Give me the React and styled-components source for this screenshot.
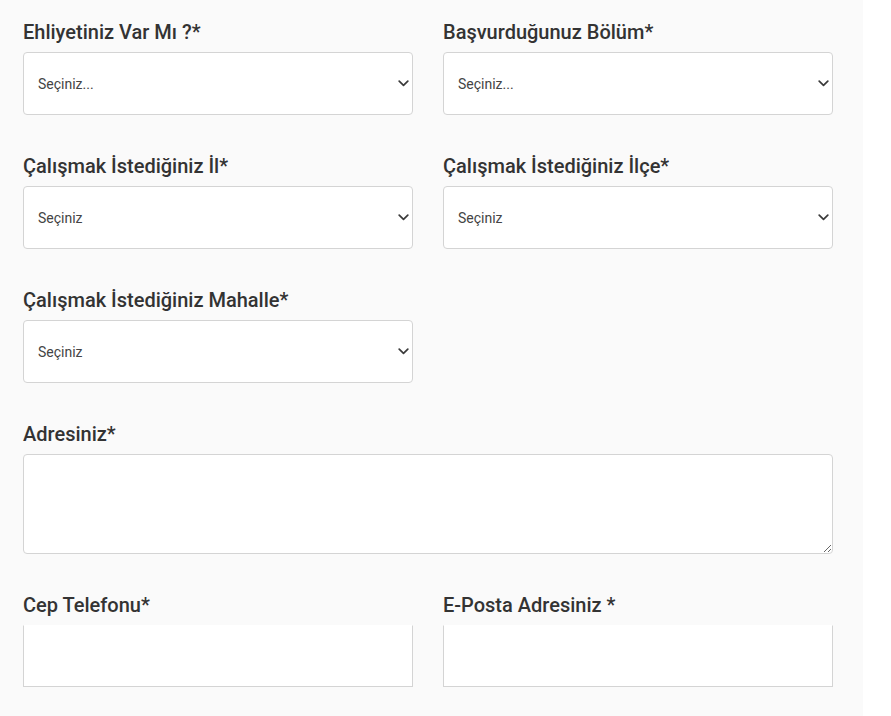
import styled, { createGlobalStyle } from 'styled-components';

const GlobalStyle = createGlobalStyle`
  body {
    margin: 0;
    background: #ffffff;
    font-family: Roboto, 'Liberation Sans', sans-serif;
  }
`;

const Page = styled.div`
  width: 863px;
  min-height: 716px;
  background: #fafafa;
  box-sizing: border-box;
  padding: 21px 0 0 23px;
`;

const Form = styled.form`
  display: grid;
  grid-template-columns: 390px 390px;
  column-gap: 30px;
  row-gap: 40px;
`;

const Field = styled.div`
  display: flex;
  flex-direction: column;
  grid-column: ${(p) => (p.$wide ? '1 / span 2' : 'auto')};
`;

const Label = styled.label`
  font-size: 20px;
  line-height: 22px;
  font-weight: 500;
  color: #333333;
  margin-bottom: 9px;
`;

const SelectWrap = styled.div`
  position: relative;
`;

const Select = styled.select`
  appearance: none;
  width: 100%;
  height: 63px;
  box-sizing: border-box;
  border: 1px solid #d4d4d4;
  border-radius: 4px;
  background: #ffffff;
  padding: 0 30px 0 14px;
  font-family: Roboto, 'Liberation Sans', sans-serif;
  font-size: 14px;
  color: #444444;
  outline: none;
`;

const Chevron = styled.svg`
  position: absolute;
  right: 4px;
  top: 28px;
  width: 11px;
  height: 7px;
  pointer-events: none;
`;

const TextArea = styled.textarea`
  width: 100%;
  height: 100px;
  box-sizing: border-box;
  border: 1px solid #d4d4d4;
  border-radius: 4px;
  background: #ffffff;
  outline: none;
  resize: vertical;
  display: block;
`;

const Input = styled.input`
  width: 100%;
  height: 62px;
  box-sizing: border-box;
  border: 1px solid #d4d4d4;
  border-top-color: transparent;
  border-radius: 0;
  background: #ffffff;
  outline: none;
  padding: 0 14px;
`;

function Dropdown({ placeholder }) {
  return (
    <SelectWrap>
      <Select defaultValue="">
        <option value="">{placeholder}</option>
      </Select>
      <Chevron viewBox="0 0 11 7">
        <path d="M1.2 1.2 L5.5 5.3 L9.8 1.2" fill="none" stroke="#3a3a3a" strokeWidth="1.7" strokeLinecap="round" strokeLinejoin="round" />
      </Chevron>
    </SelectWrap>
  );
}

export default function App() {
  return (
    <Page>
      <GlobalStyle />
      <Form>
        <Field>
          <Label>Ehliyetiniz Var Mı ?*</Label>
          <Dropdown placeholder="Seçiniz..." />
        </Field>
        <Field>
          <Label>Başvurduğunuz Bölüm*</Label>
          <Dropdown placeholder="Seçiniz..." />
        </Field>
        <Field>
          <Label>Çalışmak İstediğiniz İl*</Label>
          <Dropdown placeholder="Seçiniz" />
        </Field>
        <Field>
          <Label>Çalışmak İstediğiniz İlçe*</Label>
          <Dropdown placeholder="Seçiniz" />
        </Field>
        <Field>
          <Label>Çalışmak İstediğiniz Mahalle*</Label>
          <Dropdown placeholder="Seçiniz" />
        </Field>
        <Field $wide>
          <Label>Adresiniz*</Label>
          <TextArea />
        </Field>
        <Field>
          <Label>Cep Telefonu*</Label>
          <Input type="tel" />
        </Field>
        <Field>
          <Label>E-Posta Adresiniz *</Label>
          <Input type="email" />
        </Field>
      </Form>
    </Page>
  );
}
